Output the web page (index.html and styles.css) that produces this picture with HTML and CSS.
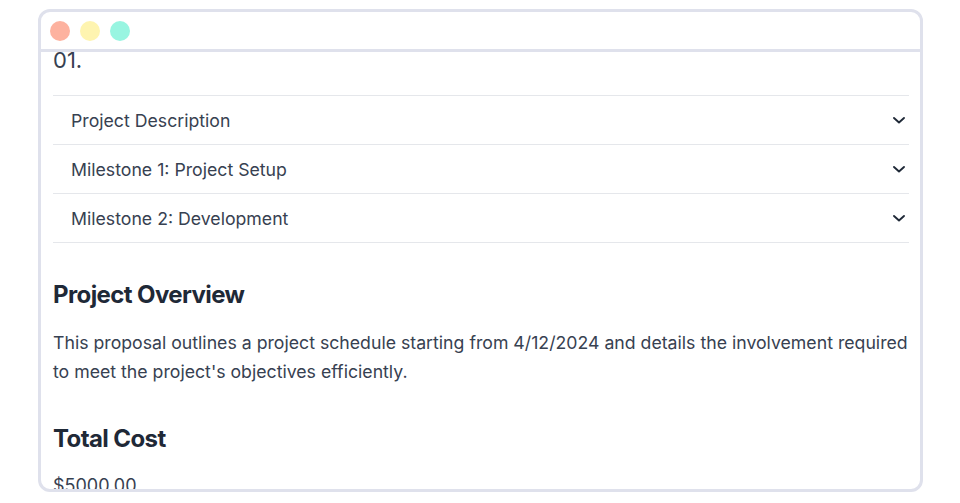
FILE: index.html
```html
<!DOCTYPE html>
<html lang="en">
<head>
<meta charset="utf-8">
<title>Project Proposal</title>
<link rel="stylesheet" href="styles.css">
</head>
<body>
<div class="window">
  <div class="titlebar">
    <span class="dot dot-red"></span>
    <span class="dot dot-yellow"></span>
    <span class="dot dot-green"></span>
  </div>
  <div class="content">
    <div class="scroll">
      <h1 class="number">01.</h1>
      <div class="accordion">
        <div class="acc-item">
          <span>Project Description</span>
          <svg class="chev" viewBox="0 0 16 16" width="16" height="16"><path d="M3 6l5 4.5 5-4.5" fill="none" stroke="#1f2937" stroke-width="1.9" stroke-linecap="round" stroke-linejoin="round"/></svg>
        </div>
        <div class="acc-item">
          <span>Milestone 1: Project Setup</span>
          <svg class="chev" viewBox="0 0 16 16" width="16" height="16"><path d="M3 6l5 4.5 5-4.5" fill="none" stroke="#1f2937" stroke-width="1.9" stroke-linecap="round" stroke-linejoin="round"/></svg>
        </div>
        <div class="acc-item">
          <span>Milestone 2: Development</span>
          <svg class="chev" viewBox="0 0 16 16" width="16" height="16"><path d="M3 6l5 4.5 5-4.5" fill="none" stroke="#1f2937" stroke-width="1.9" stroke-linecap="round" stroke-linejoin="round"/></svg>
        </div>
      </div>
      <h2 class="section-title">Project Overview</h2>
      <p class="text">This proposal outlines a project schedule starting from 4/12/2024 and details the involvement required to meet the project's objectives efficiently.</p>
      <h2 class="section-title cost-title">Total Cost</h2>
      <p class="amount">$5000.00</p>
    </div>
  </div>
</div>
</body>
</html>
```

FILE: styles.css
```css
* { box-sizing: border-box; }
html, body { margin: 0; padding: 0; background: #ffffff; }
body {
  font-family: Inter, "Noto Sans", "Liberation Sans", sans-serif;
  color: #374151;
}
.window {
  margin: 9px 0 0 38px;
  width: 885px;
  height: 483px;
  border: 3px solid #dfe1ec;
  border-radius: 12px;
  overflow: hidden;
  display: flex;
  flex-direction: column;
  background: #fff;
}
.titlebar {
  flex: none;
  height: 40px;
  border-bottom: 3px solid #dfe1ec;
  display: flex;
  align-items: center;
  gap: 10px;
  padding: 0 9px;
}
.dot { width: 20px; height: 20px; border-radius: 50%; display: block; }
.dot-red { background: #fdb29f; }
.dot-yellow { background: #fef4b0; }
.dot-green { background: #98f5e1; }
.content {
  flex: 1;
  overflow: hidden;
  padding: 0 11px 0 12px;
}
.scroll { margin-top: -7px; }
.number {
  margin: 0 0 20px;
  font-size: 22px;
  line-height: 30px;
  font-weight: 400;
  color: #374151;
}
.accordion { border-bottom: 1px solid #e5e7eb; }
.acc-item {
  height: 49px;
  border-top: 1px solid #e5e7eb;
  display: flex;
  align-items: center;
  justify-content: space-between;
  padding: 0 2px 0 18px;
  font-size: 17.7px;
  color: #374151;
}
.chev { display: block; }
.section-title {
  margin: 36px 0 0;
  font-size: 24px;
  line-height: 32px;
  font-weight: 700;
  letter-spacing: -0.6px;
  color: #1f2937;
}
.text {
  margin: 18px 0 0;
  font-size: 17.7px;
  line-height: 28.8px;
  color: #374151;
}
.cost-title { margin-top: 36px; }
.amount {
  margin: 17px 0 0;
  font-size: 18px;
  line-height: 28.8px;
  color: #374151;
}
```
